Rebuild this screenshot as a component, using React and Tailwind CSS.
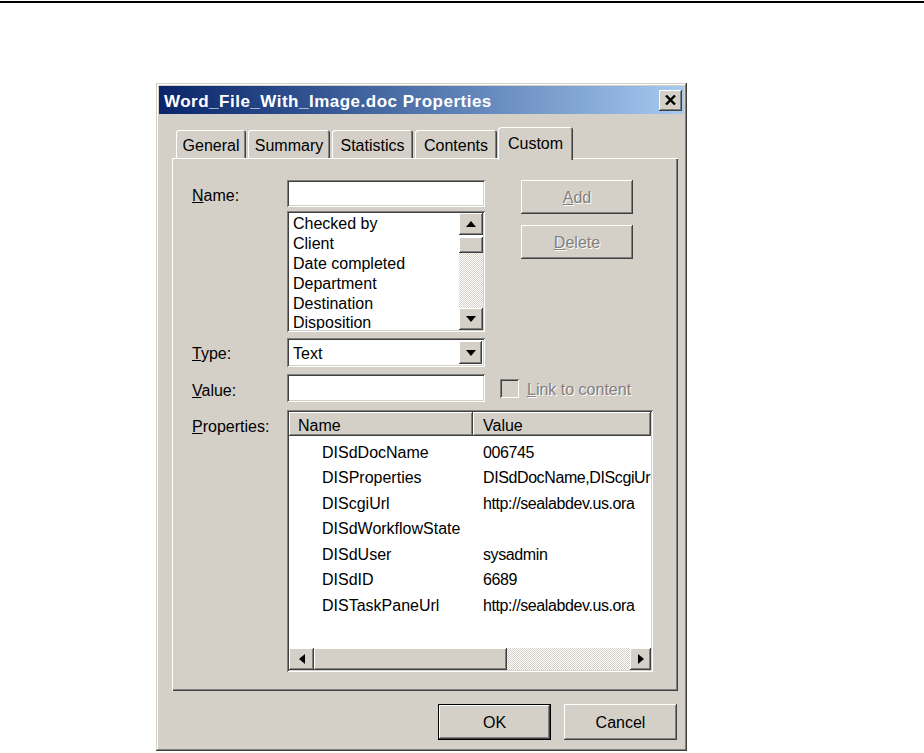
import React from "react";

const raised =
  "shadow-[inset_-1px_-1px_#404040,inset_1px_1px_#ffffff,inset_-2px_-2px_#808080,inset_2px_2px_#d4d0c8]";
const sunken =
  "shadow-[inset_1px_1px_#808080,inset_-1px_-1px_#ffffff,inset_2px_2px_#404040,inset_-2px_-2px_#d4d0c8]";
const hatch =
  "bg-[conic-gradient(#d4d0c8_25%,#ffffff_0_50%,#d4d0c8_0_75%,#ffffff_0)] bg-[length:2px_2px]";
const grayText = "text-[#808080] [text-shadow:1px_1px_0_#ffffff]";

function Arrow({ dir }) {
  if (dir === "up")
    return (
      <svg width="10" height="6" viewBox="0 0 10 6">
        <polygon points="0,6 5,0 10,6" fill="#000" />
      </svg>
    );
  if (dir === "down")
    return (
      <svg width="10" height="6" viewBox="0 0 10 6">
        <polygon points="0,0 10,0 5,6" fill="#000" />
      </svg>
    );
  if (dir === "left")
    return (
      <svg width="6" height="10" viewBox="0 0 6 10">
        <polygon points="6,0 6,10 0,5" fill="#000" />
      </svg>
    );
  return (
    <svg width="6" height="10" viewBox="0 0 6 10">
      <polygon points="0,0 0,10 6,5" fill="#000" />
    </svg>
  );
}

function Tab({ label, w, selected }) {
  if (selected) {
    return (
      <div
        className={`relative z-10 -mb-[2px] h-[33px] ${w} rounded-t-[3px] bg-[#d4d0c8] flex items-start justify-center pt-[9px] leading-none shadow-[inset_1px_1px_#ffffff,inset_-1px_0_#404040,inset_-2px_0_#808080]`}
      >
        {label}
      </div>
    );
  }
  return (
    <div
      className={`h-[28px] ${w} rounded-t-[3px] bg-[#d4d0c8] flex items-center justify-center pt-[3px] leading-none shadow-[inset_1px_1px_#ffffff,inset_-1px_0_#404040,inset_-2px_0_#808080]`}
    >
      {label}
    </div>
  );
}

const listItems = [
  "Checked by",
  "Client",
  "Date completed",
  "Department",
  "Destination",
  "Disposition",
];

const props = [
  ["DISdDocName", "006745"],
  ["DISProperties", "DISdDocName,DIScgiUr"],
  ["DIScgiUrl", "http://sealabdev.us.ora"],
  ["DISdWorkflowState", ""],
  ["DISdUser", "sysadmin"],
  ["DISdID", "6689"],
  ["DISTaskPaneUrl", "http://sealabdev.us.ora"],
];

export default function App() {
  return (
    <div className="min-h-screen bg-white text-black text-[16px] font-['Liberation_Sans',Arial,sans-serif]">
      {/* top rule */}
      <div className="mt-px h-[2px] bg-black" />

      {/* dialog */}
      <div
        className={`ml-[156px] mt-[80px] w-[531px] h-[668px] bg-[#d4d0c8] p-[3px] flex flex-col shadow-[inset_-1px_-1px_#404040,inset_1px_1px_#d4d0c8,inset_-2px_-2px_#808080,inset_2px_2px_#ffffff]`}
      >
        {/* title bar */}
        <div className="h-[28px] flex items-center justify-between pl-[5px] pr-[2px] bg-gradient-to-r from-[#0a246a] to-[#a6caf0]">
          <span className="text-white font-bold text-[17px] tracking-[0.5px] leading-none pt-[2px]">
            Word_File_With_Image.doc Properties
          </span>
          <div
            className={`w-[23px] h-[21px] bg-[#d4d0c8] flex items-center justify-center ${raised}`}
          >
            <svg width="11" height="10" viewBox="0 0 11 10">
              <path d="M1 0.5 L10 9.5 M10 0.5 L1 9.5" stroke="#000" strokeWidth="2.4" />
            </svg>
          </div>
        </div>

        {/* tabs */}
        <div className="mt-[13px] h-[31px] flex items-end pl-[17px]">
          <div className="mr-[2px]"><Tab label="General" w="w-[70px]" /></div>
          <div className="mr-[2px]"><Tab label="Summary" w="w-[82px]" /></div>
          <div className="mr-[2px]"><Tab label="Statistics" w="w-[81px]" /></div>
          <div className="mr-[1px]"><Tab label="Contents" w="w-[82px]" /></div>
          <Tab label="Custom" w="w-[75px]" selected />
        </div>

        {/* panel */}
        <div className="ml-[13px] w-[506px] h-[533px] pt-[22px] flex flex-col shadow-[inset_1px_1px_#ffffff,inset_-1px_-1px_#404040,inset_-2px_-2px_#808080]">
          {/* name row */}
          <div className="flex">
            <div className="w-[115px] pl-[20px] h-[27px] flex items-center pt-[4px] leading-none">
              <span><span className="underline">N</span>ame:</span>
            </div>
            <div className="w-[198px] flex flex-col">
              <div className={`h-[27px] bg-white ${sunken}`} />
              <div className={`mt-[4px] h-[121px] bg-white flex p-[2px] ${sunken}`}>
                <div className="flex-1 pl-[4px] pt-[1px] overflow-hidden">
                  {listItems.map((t) => (
                    <div key={t} className="h-[19.8px] flex items-center pt-[1px] leading-none whitespace-nowrap">
                      {t}
                    </div>
                  ))}
                </div>
                <div className="w-[24px] flex flex-col">
                  <div className={`h-[22px] bg-[#d4d0c8] flex items-center justify-center ${raised}`}>
                    <Arrow dir="up" />
                  </div>
                  <div className={`mt-[2px] h-[16px] bg-[#d4d0c8] ${raised}`} />
                  <div className={`flex-1 ${hatch}`} />
                  <div className={`h-[22px] bg-[#d4d0c8] flex items-center justify-center ${raised}`}>
                    <Arrow dir="down" />
                  </div>
                </div>
              </div>
            </div>
            <div className="ml-[36px] flex flex-col">
              <div className={`w-[112px] h-[34px] flex items-center justify-center pt-[2px] leading-none ${grayText} ${raised}`}>
                <span><span className="underline">A</span>dd</span>
              </div>
              <div className={`mt-[11px] w-[112px] h-[34px] flex items-center justify-center pt-[2px] leading-none ${grayText} ${raised}`}>
                <span><span className="underline">D</span>elete</span>
              </div>
            </div>
          </div>

          {/* type row */}
          <div className="mt-[6px] flex">
            <div className="w-[115px] pl-[20px] h-[29px] flex items-center pt-[2px] leading-none">
              <span><span className="underline">T</span>ype:</span>
            </div>
            <div className={`w-[198px] h-[29px] bg-white flex items-center p-[3px] pl-[6px] ${sunken}`}>
              <span className="flex-1 leading-none pt-[2px]">Text</span>
              <div className={`w-[23px] h-[23px] bg-[#d4d0c8] flex items-center justify-center ${raised}`}>
                <Arrow dir="down" />
              </div>
            </div>
          </div>

          {/* value row */}
          <div className="mt-[7px] flex items-center">
            <div className="w-[115px] pl-[20px] h-[28px] flex items-center pt-[5px] leading-none">
              <span><span className="underline">V</span>alue:</span>
            </div>
            <div className={`w-[198px] h-[28px] bg-white ${sunken}`} />
            <div className={`ml-[15px] w-[19px] h-[19px] bg-[#d4d0c8] ${sunken}`} />
            <span className={`ml-[8px] leading-none pt-[4px] ${grayText}`}>
              <span className="underline">L</span>ink to content
            </span>
          </div>

          {/* properties row */}
          <div className="mt-[8px] flex">
            <div className="w-[115px] pl-[20px] h-[30px] flex items-center pt-[4px] leading-none">
              <span><span className="underline">P</span>roperties:</span>
            </div>
            <div className={`w-[366px] h-[262px] bg-white p-[2px] flex flex-col ${sunken}`}>
              <div className="h-[24px] flex bg-[#d4d0c8]">
                <div className={`w-[184px] pl-[9px] flex items-center pt-[4px] leading-none ${raised}`}>Name</div>
                <div className={`flex-1 pl-[10px] flex items-center pt-[4px] leading-none ${raised}`}>Value</div>
              </div>
              <div className="flex-1 pt-[4px] overflow-hidden">
                {props.map(([n, v]) => (
                  <div key={n} className="h-[25.5px] flex items-center leading-none">
                    <div className="w-[184px] pl-[33px] whitespace-nowrap">{n}</div>
                    <div className="flex-1 pl-[10px] whitespace-nowrap overflow-hidden tracking-[-0.4px]">{v}</div>
                  </div>
                ))}
              </div>
              <div className="h-[22px] flex bg-[#d4d0c8]">
                <div className={`w-[25px] flex items-center justify-center ${raised}`}>
                  <Arrow dir="left" />
                </div>
                <div className={`w-[193px] ${raised}`} />
                <div className={`flex-1 ${hatch}`} />
                <div className={`w-[21px] flex items-center justify-center ${raised}`}>
                  <Arrow dir="right" />
                </div>
              </div>
            </div>
          </div>
        </div>

        {/* bottom buttons */}
        <div className="mt-[13px] flex justify-end gap-[13px] pr-[7px]">
          <div className="w-[113px] h-[36px] border border-black">
            <div className={`h-full flex items-center justify-center pt-[1px] leading-none ${raised}`}>OK</div>
          </div>
          <div className={`w-[113px] h-[36px] flex items-center justify-center pt-[1px] leading-none ${raised}`}>
            Cancel
          </div>
        </div>
      </div>
    </div>
  );
}
